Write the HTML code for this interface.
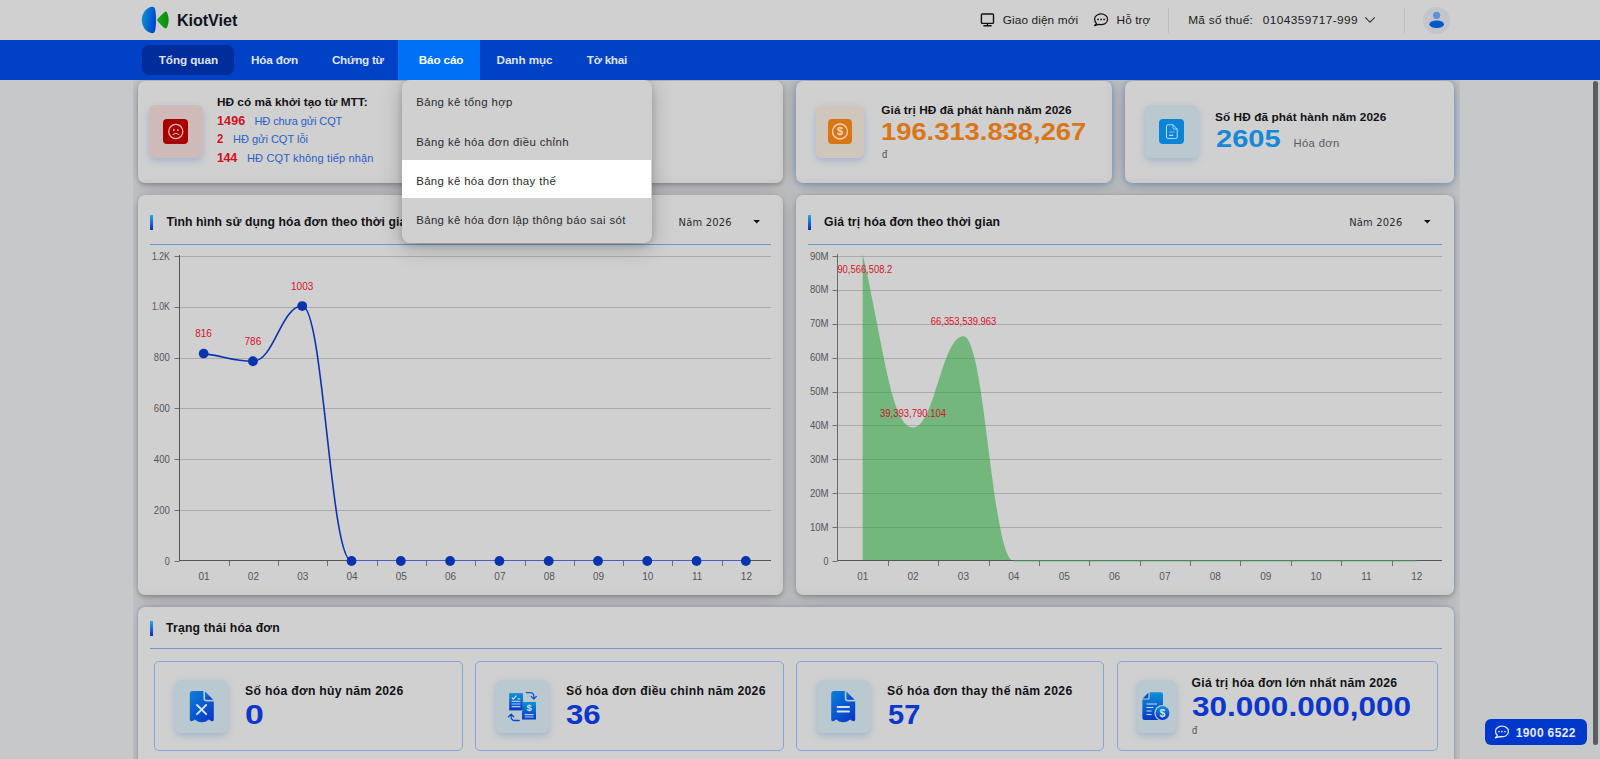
<!DOCTYPE html>
<html lang="vi"><head><meta charset="utf-8"><title>KiotViet - Tổng quan</title>
<style>
*{box-sizing:border-box}
html,body{margin:0;padding:0}
body{width:1600px;height:759px;overflow:hidden;background:#c7c8ca;font-family:"Liberation Sans",sans-serif;position:relative}
.abs{position:absolute}
.t{position:absolute;white-space:pre;line-height:1;transform-origin:0 50%}
.card{position:absolute;background:#d0d0d0;border-radius:7px;}
.c1{box-shadow:0 0 20px 2px rgba(0,5,20,.16),0 2px 4px rgba(0,0,0,.24)}
.c2{box-shadow:0 0 20px 2px rgba(0,5,20,.16),0 1px 6px rgba(50,100,190,.5)}
.c4{box-shadow:0 0 20px 2px rgba(0,5,20,.16),0 2px 4px rgba(0,0,0,.2),2px 0 4px -1px rgba(70,120,200,.18)}
.c3{box-shadow:0 0 20px 2px rgba(0,5,20,.16),0 0 3px rgba(60,110,200,.45)}
.ibox{position:absolute;border-radius:6px;box-shadow:0 3px 7px rgba(80,125,195,.34)}
.isq{position:absolute;border-radius:4px}
.bar{position:absolute;width:3px;background:linear-gradient(#22a8ea,#0a2acc)}
.ul{position:absolute;height:1px;background:#6b9ad6}
.sc{position:absolute;border:1px solid #82a6da;border-radius:5px}
</style></head><body>

<!-- header -->
<div class="abs" style="left:0;top:0;width:1600px;height:40px;background:#d0d0d0;z-index:20"></div>
<div class="abs" style="left:0;top:40px;width:1600px;height:40px;background:#0041c5;z-index:20"></div>
<div class="abs" style="left:142px;top:45px;width:92px;height:30px;border-radius:7px;background:#002c9c;z-index:21"></div>
<div class="abs" style="left:398px;top:39.5px;width:82px;height:40.5px;background:#0070f4;z-index:21"></div>
<div class="abs" style="left:1168px;top:8px;width:1px;height:25px;background:#bcbdc0;z-index:21"></div>
<div class="abs" style="left:1404px;top:8px;width:1px;height:25px;background:#bcbdc0;z-index:21"></div>
<div class="abs" style="left:1423px;top:6.5px;width:27px;height:27px;border-radius:50%;background:#c3c5ca;z-index:21"></div>
<!-- cards -->
<div class="abs" style="left:133px;top:80px;width:1327px;height:679px;overflow:hidden">
<div class="card c1" style="left:5px;top:0.5px;width:645px;height:102px"></div>
<div class="card c2" style="left:663px;top:0.5px;width:316px;height:102px"></div>
<div class="card c2" style="left:992px;top:0.5px;width:329px;height:102px"></div>
<div class="card c1" style="left:5px;top:115px;width:645px;height:400px"></div>
<div class="card c4" style="left:663px;top:115px;width:658px;height:400px"></div>
<div class="card c3" style="left:5px;top:527.3px;width:1316px;height:200px"></div>
</div>
<!-- icon boxes -->
<div class="ibox" style="left:149px;top:105px;width:53.6px;height:53px;background:#cebab9"></div>
<div class="isq" style="left:163.4px;top:119px;width:24.8px;height:25px;background:#a80000"></div>
<div class="ibox" style="left:816px;top:105px;width:48px;height:53px;background:#cfc7bb"></div>
<div class="isq" style="left:827.6px;top:119px;width:24.8px;height:25px;background:#d87616"></div>
<div class="ibox" style="left:1145px;top:105px;width:53px;height:53px;background:#bac9cf"></div>
<div class="isq" style="left:1159.2px;top:119px;width:24.9px;height:25px;background:#0b84d6"></div>
<!-- section bars -->
<div class="bar" style="left:150px;top:215px;height:14.5px"></div>
<div class="ul" style="left:150px;top:244px;width:621px"></div>
<div class="bar" style="left:808px;top:215px;height:14.5px"></div>
<div class="ul" style="left:808px;top:244px;width:634px"></div>
<div class="bar" style="left:150px;top:621px;height:15px"></div>
<div class="ul" style="left:150px;top:648px;width:1292px"></div>
<!-- small cards -->
<div class="sc" style="left:154px;top:661.4px;width:308.6px;height:89.4px"></div>
<div class="sc" style="left:475px;top:661.4px;width:308.6px;height:89.4px"></div>
<div class="sc" style="left:796px;top:661.4px;width:308px;height:89.4px"></div>
<div class="sc" style="left:1117px;top:661.4px;width:321px;height:89.4px"></div>
<div class="ibox" style="left:175px;top:680px;width:53px;height:53px;background:#bac9cf"></div>
<div class="ibox" style="left:495.5px;top:680px;width:53.5px;height:53px;background:#bac9cf"></div>
<div class="ibox" style="left:816.5px;top:680px;width:53.5px;height:53px;background:#bac9cf"></div>
<div class="ibox" style="left:1136.6px;top:680px;width:39px;height:53px;background:#bac9cf"></div>
<!-- dropdown -->
<div class="abs" style="left:402px;top:80px;width:250px;height:163px;background:#d0d0d0;border-radius:8px;box-shadow:0 4px 22px rgba(0,0,0,.24),0 2px 6px rgba(0,0,0,.14);z-index:19"></div>
<div class="abs" style="left:402px;top:160px;width:249px;height:38px;background:#fff;z-index:19"></div>
<!-- phone btn -->
<div class="abs" style="left:1485px;top:719px;width:102px;height:26px;border-radius:6px;background:#0038cc;z-index:39"></div>
<!-- scrollbar -->
<div class="abs" style="left:1593px;top:81px;width:4.5px;height:664px;border-radius:3px;background:#5c5c5e;z-index:39"></div>

<svg class="abs" style="left:0;top:0;z-index:2" width="1600" height="759" viewBox="0 0 1600 759" shape-rendering="auto"><line x1="179.5" x2="771" y1="510.5" y2="510.5" stroke="#aaaaab"/><line x1="179.5" x2="771" y1="459.5" y2="459.5" stroke="#aaaaab"/><line x1="179.5" x2="771" y1="408.5" y2="408.5" stroke="#aaaaab"/><line x1="179.5" x2="771" y1="358.5" y2="358.5" stroke="#aaaaab"/><line x1="179.5" x2="771" y1="307.5" y2="307.5" stroke="#aaaaab"/><line x1="179.5" x2="771" y1="256.5" y2="256.5" stroke="#aaaaab"/><line x1="174.5" x2="179.5" y1="561.5" y2="561.5" stroke="#707072"/><line x1="174.5" x2="179.5" y1="510.5" y2="510.5" stroke="#707072"/><line x1="174.5" x2="179.5" y1="459.5" y2="459.5" stroke="#707072"/><line x1="174.5" x2="179.5" y1="408.5" y2="408.5" stroke="#707072"/><line x1="174.5" x2="179.5" y1="358.5" y2="358.5" stroke="#707072"/><line x1="174.5" x2="179.5" y1="307.5" y2="307.5" stroke="#707072"/><line x1="174.5" x2="179.5" y1="256.5" y2="256.5" stroke="#707072"/><line x1="179.5" x2="179.5" y1="255" y2="561" stroke="#555557"/><line x1="179.5" x2="771" y1="560.5" y2="560.5" stroke="#555557"/><line x1="229.5" x2="229.5" y1="561" y2="566" stroke="#707072"/><line x1="278.5" x2="278.5" y1="561" y2="566" stroke="#707072"/><line x1="327.5" x2="327.5" y1="561" y2="566" stroke="#707072"/><line x1="377.5" x2="377.5" y1="561" y2="566" stroke="#707072"/><line x1="426.5" x2="426.5" y1="561" y2="566" stroke="#707072"/><line x1="475.5" x2="475.5" y1="561" y2="566" stroke="#707072"/><line x1="525.5" x2="525.5" y1="561" y2="566" stroke="#707072"/><line x1="574.5" x2="574.5" y1="561" y2="566" stroke="#707072"/><line x1="623.5" x2="623.5" y1="561" y2="566" stroke="#707072"/><line x1="672.5" x2="672.5" y1="561" y2="566" stroke="#707072"/><line x1="722.5" x2="722.5" y1="561" y2="566" stroke="#707072"/><path d="M203.65,353.60 C224.84,356.12 231.74,361.23 252.94,361.23 C274.13,361.23 281.03,306.07 302.23,306.07 C323.42,306.07 330.33,561.00 351.52,561.00" fill="none" stroke="#0a34ad" stroke-width="1.6"/><line x1="351.52" x2="745.85" y1="560.5" y2="560.5" stroke="#4a5cc6" stroke-width="1.2"/><circle cx="203.65" cy="353.60" r="4.9" fill="#0a34ad"/><circle cx="252.94" cy="361.23" r="4.9" fill="#0a34ad"/><circle cx="302.23" cy="306.07" r="4.9" fill="#0a34ad"/><circle cx="351.52" cy="561.00" r="4.9" fill="#0a34ad"/><circle cx="400.81" cy="561.00" r="4.9" fill="#0a34ad"/><circle cx="450.10" cy="561.00" r="4.9" fill="#0a34ad"/><circle cx="499.40" cy="561.00" r="4.9" fill="#0a34ad"/><circle cx="548.69" cy="561.00" r="4.9" fill="#0a34ad"/><circle cx="597.98" cy="561.00" r="4.9" fill="#0a34ad"/><circle cx="647.27" cy="561.00" r="4.9" fill="#0a34ad"/><circle cx="696.56" cy="561.00" r="4.9" fill="#0a34ad"/><circle cx="745.85" cy="561.00" r="4.9" fill="#0a34ad"/><line x1="837.5" x2="1442" y1="527.5" y2="527.5" stroke="#aaaaab"/><line x1="837.5" x2="1442" y1="493.5" y2="493.5" stroke="#aaaaab"/><line x1="837.5" x2="1442" y1="459.5" y2="459.5" stroke="#aaaaab"/><line x1="837.5" x2="1442" y1="425.5" y2="425.5" stroke="#aaaaab"/><line x1="837.5" x2="1442" y1="392.5" y2="392.5" stroke="#aaaaab"/><line x1="837.5" x2="1442" y1="358.5" y2="358.5" stroke="#aaaaab"/><line x1="837.5" x2="1442" y1="324.5" y2="324.5" stroke="#aaaaab"/><line x1="837.5" x2="1442" y1="290.5" y2="290.5" stroke="#aaaaab"/><line x1="837.5" x2="1442" y1="256.5" y2="256.5" stroke="#aaaaab"/><line x1="832.5" x2="837.5" y1="561.5" y2="561.5" stroke="#707072"/><line x1="832.5" x2="837.5" y1="527.5" y2="527.5" stroke="#707072"/><line x1="832.5" x2="837.5" y1="493.5" y2="493.5" stroke="#707072"/><line x1="832.5" x2="837.5" y1="459.5" y2="459.5" stroke="#707072"/><line x1="832.5" x2="837.5" y1="425.5" y2="425.5" stroke="#707072"/><line x1="832.5" x2="837.5" y1="392.5" y2="392.5" stroke="#707072"/><line x1="832.5" x2="837.5" y1="358.5" y2="358.5" stroke="#707072"/><line x1="832.5" x2="837.5" y1="324.5" y2="324.5" stroke="#707072"/><line x1="832.5" x2="837.5" y1="290.5" y2="290.5" stroke="#707072"/><line x1="832.5" x2="837.5" y1="256.5" y2="256.5" stroke="#707072"/><path d="M862.69,254.08 C884.35,349.46 891.40,427.50 913.06,427.50 C934.72,427.50 941.78,336.14 963.44,336.14 C985.10,336.14 992.15,561.00 1013.81,561.00 C1035.47,561.00 1042.53,561.00 1064.19,561.00 C1085.85,561.00 1092.90,561.00 1114.56,561.00 C1136.22,561.00 1143.28,561.00 1164.94,561.00 C1186.60,561.00 1193.65,561.00 1215.31,561.00 C1236.97,561.00 1244.03,561.00 1265.69,561.00 C1287.35,561.00 1294.40,561.00 1316.06,561.00 C1337.72,561.00 1344.78,561.00 1366.44,561.00 C1388.10,561.00 1395.15,561.00 1416.81,561.00 L1416.81,561 L862.69,561 Z" fill="#30a541" fill-opacity="0.58"/><line x1="837.5" x2="837.5" y1="254" y2="561" stroke="#6a6a6c"/><line x1="837.5" x2="1442" y1="560.5" y2="560.5" stroke="#555557"/><line x1="1013.81" x2="1416.81" y1="560.6" y2="560.6" stroke="#4d8659" stroke-width="1.1"/><line x1="888.5" x2="888.5" y1="561" y2="566" stroke="#707072"/><line x1="938.5" x2="938.5" y1="561" y2="566" stroke="#707072"/><line x1="989.5" x2="989.5" y1="561" y2="566" stroke="#707072"/><line x1="1039.5" x2="1039.5" y1="561" y2="566" stroke="#707072"/><line x1="1089.5" x2="1089.5" y1="561" y2="566" stroke="#707072"/><line x1="1140.5" x2="1140.5" y1="561" y2="566" stroke="#707072"/><line x1="1190.5" x2="1190.5" y1="561" y2="566" stroke="#707072"/><line x1="1240.5" x2="1240.5" y1="561" y2="566" stroke="#707072"/><line x1="1291.5" x2="1291.5" y1="561" y2="566" stroke="#707072"/><line x1="1341.5" x2="1341.5" y1="561" y2="566" stroke="#707072"/><line x1="1392.5" x2="1392.5" y1="561" y2="566" stroke="#707072"/></svg>
<svg class="abs" style="left:0;top:0;z-index:3;font-family:'Liberation Sans',sans-serif" width="1600" height="759"><text x="169.8" y="564.5" text-anchor="end" fill="#555659" font-size="10" textLength="5" lengthAdjust="spacingAndGlyphs">0</text><text x="169.8" y="513.7" text-anchor="end" fill="#555659" font-size="10" textLength="16" lengthAdjust="spacingAndGlyphs">200</text><text x="169.8" y="462.8" text-anchor="end" fill="#555659" font-size="10" textLength="16" lengthAdjust="spacingAndGlyphs">400</text><text x="169.8" y="412.0" text-anchor="end" fill="#555659" font-size="10" textLength="16" lengthAdjust="spacingAndGlyphs">600</text><text x="169.8" y="361.2" text-anchor="end" fill="#555659" font-size="10" textLength="16" lengthAdjust="spacingAndGlyphs">800</text><text x="169.8" y="310.3" text-anchor="end" fill="#555659" font-size="10" textLength="17.9" lengthAdjust="spacingAndGlyphs">1.0K</text><text x="169.8" y="259.5" text-anchor="end" fill="#555659" font-size="10" textLength="17.9" lengthAdjust="spacingAndGlyphs">1.2K</text><text x="204.1" y="579.8" text-anchor="middle" fill="#555659" font-size="10">01</text><text x="862.7" y="579.8" text-anchor="middle" fill="#555659" font-size="10">01</text><text x="253.4" y="579.8" text-anchor="middle" fill="#555659" font-size="10">02</text><text x="913.1" y="579.8" text-anchor="middle" fill="#555659" font-size="10">02</text><text x="302.7" y="579.8" text-anchor="middle" fill="#555659" font-size="10">03</text><text x="963.4" y="579.8" text-anchor="middle" fill="#555659" font-size="10">03</text><text x="352.0" y="579.8" text-anchor="middle" fill="#555659" font-size="10">04</text><text x="1013.8" y="579.8" text-anchor="middle" fill="#555659" font-size="10">04</text><text x="401.3" y="579.8" text-anchor="middle" fill="#555659" font-size="10">05</text><text x="1064.2" y="579.8" text-anchor="middle" fill="#555659" font-size="10">05</text><text x="450.6" y="579.8" text-anchor="middle" fill="#555659" font-size="10">06</text><text x="1114.6" y="579.8" text-anchor="middle" fill="#555659" font-size="10">06</text><text x="499.9" y="579.8" text-anchor="middle" fill="#555659" font-size="10">07</text><text x="1164.9" y="579.8" text-anchor="middle" fill="#555659" font-size="10">07</text><text x="549.2" y="579.8" text-anchor="middle" fill="#555659" font-size="10">08</text><text x="1215.3" y="579.8" text-anchor="middle" fill="#555659" font-size="10">08</text><text x="598.5" y="579.8" text-anchor="middle" fill="#555659" font-size="10">09</text><text x="1265.7" y="579.8" text-anchor="middle" fill="#555659" font-size="10">09</text><text x="647.8" y="579.8" text-anchor="middle" fill="#555659" font-size="10">10</text><text x="1316.1" y="579.8" text-anchor="middle" fill="#555659" font-size="10">10</text><text x="697.1" y="579.8" text-anchor="middle" fill="#555659" font-size="10">11</text><text x="1366.4" y="579.8" text-anchor="middle" fill="#555659" font-size="10">11</text><text x="746.4" y="579.8" text-anchor="middle" fill="#555659" font-size="10">12</text><text x="1416.8" y="579.8" text-anchor="middle" fill="#555659" font-size="10">12</text><text x="828.6" y="564.5" text-anchor="end" fill="#555659" font-size="10" textLength="5" lengthAdjust="spacingAndGlyphs">0</text><text x="828.6" y="530.6" text-anchor="end" fill="#555659" font-size="10" textLength="18.7" lengthAdjust="spacingAndGlyphs">10M</text><text x="828.6" y="496.7" text-anchor="end" fill="#555659" font-size="10" textLength="18.7" lengthAdjust="spacingAndGlyphs">20M</text><text x="828.6" y="462.8" text-anchor="end" fill="#555659" font-size="10" textLength="18.7" lengthAdjust="spacingAndGlyphs">30M</text><text x="828.6" y="428.9" text-anchor="end" fill="#555659" font-size="10" textLength="18.7" lengthAdjust="spacingAndGlyphs">40M</text><text x="828.6" y="395.1" text-anchor="end" fill="#555659" font-size="10" textLength="18.7" lengthAdjust="spacingAndGlyphs">50M</text><text x="828.6" y="361.2" text-anchor="end" fill="#555659" font-size="10" textLength="18.7" lengthAdjust="spacingAndGlyphs">60M</text><text x="828.6" y="327.3" text-anchor="end" fill="#555659" font-size="10" textLength="18.7" lengthAdjust="spacingAndGlyphs">70M</text><text x="828.6" y="293.4" text-anchor="end" fill="#555659" font-size="10" textLength="18.7" lengthAdjust="spacingAndGlyphs">80M</text><text x="828.6" y="259.5" text-anchor="end" fill="#555659" font-size="10" textLength="18.7" lengthAdjust="spacingAndGlyphs">90M</text><text x="203.6" y="337.1" text-anchor="middle" fill="#d8102a" font-size="10">816</text><text x="252.9" y="344.7" text-anchor="middle" fill="#d8102a" font-size="10">786</text><text x="302.2" y="289.6" text-anchor="middle" fill="#d8102a" font-size="10">1003</text><text x="864.8" y="273.0" text-anchor="middle" fill="#d8102a" font-size="10" textLength="54.8" lengthAdjust="spacingAndGlyphs">90,566,508.2</text><text x="963.5" y="324.8" text-anchor="middle" fill="#d8102a" font-size="10" textLength="65.4" lengthAdjust="spacingAndGlyphs">66,353,539.963</text><text x="913.0" y="416.5" text-anchor="middle" fill="#d8102a" font-size="10" textLength="66" lengthAdjust="spacingAndGlyphs">39,393,790.104</text></svg>
<!--ICONS-->
<svg class="abs" style="left:0;top:0;z-index:22" width="1600" height="80" viewBox="0 0 1600 80"><defs><linearGradient id="lgb" x1="0" y1="0.3" x2="1" y2="0.6"><stop offset="0" stop-color="#0c94d2"/><stop offset="1" stop-color="#0040cf"/></linearGradient>
<linearGradient id="lgg" x1="0" y1="0" x2="1" y2="0"><stop offset="0" stop-color="#18a818"/><stop offset="1" stop-color="#088c0c"/></linearGradient></defs>
<path d="M152.3,6.8 C147,7 141.8,13 141.8,20 C141.8,27 147,33 152.3,33.2 C154,33.2 155,32 155.3,30 C156.3,24 156.3,16 155.3,10 C155,8 154,6.8 152.3,6.8 Z" fill="url(#lgb)"/>
<path d="M157.5,19 C160,16 163,13.1 164.8,11.9 C165.8,11.3 166.7,11.7 167.1,12.7 C169.2,17.4 169.2,22.6 167.1,27.3 C166.7,28.3 165.8,28.7 164.8,28.1 C163,26.9 160,24 157.5,21 C157,20.4 157,19.6 157.5,19 Z" fill="url(#lgg)"/><rect x="981.4" y="14" width="12.1" height="9.4" rx="1" fill="none" stroke="#111" stroke-width="1.4"/><path d="M987.45,23.6 V25.4 M983.4,25.7 H991.6" stroke="#111" stroke-width="1.4" fill="none"/><path d="M1096.5,23.4 C1093.8999999999999,21.0 1093.8999999999999,16.799999999999997 1096.8999999999999,15.2 C1099.5,13.799999999999999 1103.3,13.799999999999999 1105.6999999999998,15.399999999999999 C1108.5,17.4 1108.1,21.799999999999997 1105.1,23.599999999999998 C1103.3,24.599999999999998 1100.1,24.599999999999998 1098.6999999999998,24.4 L1094.5,25.599999999999998 Z" fill="none" stroke="#111" stroke-width="1.25" stroke-linejoin="round"/><circle cx="1098.1" cy="19.4" r="0.85" fill="#111"/><circle cx="1101.1" cy="19.4" r="0.85" fill="#111"/><circle cx="1104.1" cy="19.4" r="0.85" fill="#111"/><path d="M1365.2,17.4 L1370,22.2 L1374.8,17.4" fill="none" stroke="#333" stroke-width="1.1"/><circle cx="1436.6" cy="15.3" r="3.6" fill="#5f92d2"/><ellipse cx="1436.7" cy="24.2" rx="7.3" ry="3.8" fill="#0057c8"/></svg><svg class="abs" style="left:0;top:0;z-index:4" width="1600" height="759" viewBox="0 0 1600 759"><defs>
<linearGradient id="gd" x1="0.1" y1="0" x2="0.9" y2="1"><stop offset="0" stop-color="#0a7cd8"/><stop offset="1" stop-color="#0a36c6"/></linearGradient>
<linearGradient id="gv" x1="0" y1="0" x2="0" y2="1"><stop offset="0" stop-color="#0a92d6"/><stop offset="1" stop-color="#0a36c6"/></linearGradient>
</defs><circle cx="175.8" cy="131.5" r="7.1" fill="none" stroke="#e6bcbc" stroke-width="1.25"/><rect x="173" y="129.2" width="1.6" height="1.6" fill="#e6bcbc"/><rect x="177" y="129.2" width="1.6" height="1.6" fill="#e6bcbc"/><path d="M172.5,134.6 Q175.9,132.2 179.3,134.6" fill="none" stroke="#e6bcbc" stroke-width="1"/><circle cx="840" cy="131.5" r="7.5" fill="none" stroke="#f1d6b6" stroke-width="1.3"/><text x="840" y="135.4" text-anchor="middle" font-size="11" font-weight="700" fill="#f1d6b6" font-family="Liberation Sans,sans-serif">$</text><path d="M1168,124.8 H1173 L1177.2,129 V137 Q1177.2,138.5 1175.7,138.5 H1168 Q1166.5,138.5 1166.5,137 V126.3 Q1166.5,124.8 1168,124.8 Z M1173,124.8 V127.8 Q1173,129 1174.2,129 H1177.2" fill="none" stroke="#b6d8f2" stroke-width="1"/><path d="M1169.2,132 H1174.6" stroke="#6cb4ea" stroke-width="1.2"/><path d="M1169.2,135.3 H1173.2" stroke="#d6e8f6" stroke-width="1.1"/><path d="M192.8,691 H203.4 V698.2 Q203.4,701.4 206.60000000000002,701.4 H213.8 V719.6 Q213.8,721.6 211.8,721.2 Q210.20000000000002,720.6 208.8,719.6 Q207.4,720.6 205.8,721.4 Q201.8,723 197.8,721.4 Q196.20000000000002,720.6 194.8,719.6 Q193.4,720.6 191.8,721.2 Q189.8,721.6 189.8,719.6 V694 Q189.8,691 192.8,691 Z" fill="url(#gd)"/><path d="M205.0,691.6 L213.20000000000002,699.8 H206.60000000000002 Q205.0,699.8 205.0,698.2 Z" fill="url(#gd)"/><path d="M197,705 L206.2,714.2 M206.2,705 L197,714.2" stroke="#d2e2ec" stroke-width="1.9" stroke-linecap="round"/><path d="M834.2,691 H844.8000000000001 V698.2 Q844.8000000000001,701.4 848.0,701.4 H855.2 V719.6 Q855.2,721.6 853.2,721.2 Q851.6,720.6 850.2,719.6 Q848.8000000000001,720.6 847.2,721.4 Q843.2,723 839.2,721.4 Q837.6,720.6 836.2,719.6 Q834.8000000000001,720.6 833.2,721.2 Q831.2,721.6 831.2,719.6 V694 Q831.2,691 834.2,691 Z" fill="url(#gd)"/><path d="M846.4000000000001,691.6 L854.6,699.8 H848.0 Q846.4000000000001,699.8 846.4000000000001,698.2 Z" fill="url(#gd)"/><path d="M837.6,706.9 H849 M837.6,711.5 H849" stroke="#d2e2ec" stroke-width="2" stroke-linecap="round"/><rect x="509.2" y="693.1" width="13.7" height="17.3" fill="url(#gv)"/><path d="M522.9,702.1 H536 V719.5 H522 V711 H522.9 Z" fill="url(#gv)"/><path d="M511.8,697.6 L513.4,699.2 L516.4,695.6" fill="none" stroke="#d2e2ec" stroke-width="1.2"/><path d="M517.4,698.9 H520.4 M511.6,701.4 H520.4 M511.6,704 H520.4 M511.6,706.6 H520.4" stroke="#a9cdea" stroke-width="1.1"/><text x="529.2" y="711.4" text-anchor="middle" font-size="9.5" font-weight="700" fill="#d2e2ec" font-family="Liberation Sans,sans-serif">$</text><path d="M524.6,714.6 H533.6 M524.6,717 H533.6" stroke="#a9cdea" stroke-width="1.1"/><path d="M526.2,692.6 H530 Q533.8,692.6 533.8,696.4 V698.6 M531.2,696.4 L533.8,699 L536.4,696.4" fill="none" stroke="#0a5cd0" stroke-width="1.3" stroke-linecap="round" stroke-linejoin="round"/><path d="M519.2,720.5 H514.9 Q511.1,720.5 511.1,716.7 V714.6 M508.5,716.8 L511.1,714.2 L513.7,716.8" fill="none" stroke="#0a4acc" stroke-width="1.3" stroke-linecap="round" stroke-linejoin="round"/><path d="M1149.6,692.3 H1161 Q1163,692.3 1163,694.3 V718.1 Q1163,720.1 1161,720.1 H1144.4 Q1142.4,720.1 1142.4,718.1 V699.6 H1148 Q1149.6,699.6 1149.6,698 Z" fill="url(#gv)"/><path d="M1148.4,692.6 V697.4 Q1148.4,698.4 1147.4,698.4 H1142.7 Z" fill="#0a52cc"/><path d="M1146.6,704 H1157 M1146.6,707.5 H1153.4 M1146.6,711 H1151.6 M1146.6,714.5 H1151.6" stroke="#c6dcec" stroke-width="1.2"/><circle cx="1162.5" cy="713" r="8.1" fill="#bac9cf"/><circle cx="1162.5" cy="713" r="6.9" fill="url(#gv)"/><text x="1162.5" y="716.9" text-anchor="middle" font-size="10.5" font-weight="700" fill="#d6e6f0" font-family="Liberation Sans,sans-serif">$</text><path d="M753.4,220 H760 L756.7,223.5 Z" fill="#111"/><path d="M1424,220 H1430.6 L1427.3,223.5 Z" fill="#111"/></svg><svg class="abs" style="left:0;top:0;z-index:41" width="1600" height="759" viewBox="0 0 1600 759"><path d="M1497.4,735.6 C1494.8,733.2 1494.8,729.0 1497.8,727.4 C1500.4,726.0 1504.2,726.0 1506.6,727.6 C1509.4,729.6 1509.0,734.0 1506.0,735.8000000000001 C1504.2,736.8000000000001 1501,736.8000000000001 1499.6,736.6 L1495.4,737.8000000000001 Z" fill="none" stroke="#dfe5f5" stroke-width="1.3" stroke-linejoin="round"/><circle cx="1499" cy="731.6" r="0.85" fill="#dfe5f5"/><circle cx="1502" cy="731.6" r="0.85" fill="#dfe5f5"/><circle cx="1505" cy="731.6" r="0.85" fill="#dfe5f5"/></svg>
<span class="t" style="left:176.90px;top:11px;line-height:18px;font-size:16.2px;font-weight:700;color:#0e1322;z-index:30;letter-spacing:-0.067px;">KiotViet</span>
<span class="t" style="left:1002.75px;top:13px;line-height:14px;font-size:11.8px;font-weight:400;color:#1a1a1c;z-index:30;letter-spacing:0.117px;">Giao diện mới</span>
<span class="t" style="left:1116.50px;top:13px;line-height:14px;font-size:11.8px;font-weight:400;color:#1a1a1c;z-index:30;letter-spacing:0.107px;">Hỗ trợ</span>
<span class="t" style="left:1188.20px;top:13px;line-height:14px;font-size:11.8px;font-weight:400;color:#1a1a1c;z-index:30;letter-spacing:0.294px;">Mã số thuế:</span>
<span class="t" style="left:1262.80px;top:13px;line-height:14px;font-size:11.8px;font-weight:400;color:#1a1a1c;z-index:30;letter-spacing:0.434px;">0104359717-999</span>
<span class="t" style="left:158.75px;top:53px;line-height:13px;font-size:11.7px;font-weight:700;color:#dfe3ef;z-index:30;letter-spacing:-0.054px;">Tổng quan</span>
<span class="t" style="left:251.00px;top:53px;line-height:13px;font-size:11.7px;font-weight:700;color:#dfe3ef;z-index:30;letter-spacing:-0.146px;">Hóa đơn</span>
<span class="t" style="left:331.90px;top:53px;line-height:13px;font-size:11.7px;font-weight:700;color:#dfe3ef;z-index:30;letter-spacing:-0.251px;">Chứng từ</span>
<span class="t" style="left:418.80px;top:53px;line-height:13px;font-size:11.7px;font-weight:700;color:#ffffff;z-index:30;letter-spacing:-0.138px;">Báo cáo</span>
<span class="t" style="left:496.60px;top:53px;line-height:13px;font-size:11.7px;font-weight:700;color:#dfe3ef;z-index:30;letter-spacing:-0.085px;">Danh mục</span>
<span class="t" style="left:586.80px;top:53px;line-height:13px;font-size:11.7px;font-weight:700;color:#dfe3ef;z-index:30;letter-spacing:-0.289px;">Tờ khai</span>
<span class="t" style="left:416.20px;top:96px;line-height:12px;font-size:11.4px;font-weight:400;color:#2b2b2d;z-index:25;letter-spacing:0.380px;">Bảng kê tổng hợp</span>
<span class="t" style="left:416.20px;top:136px;line-height:12px;font-size:11.4px;font-weight:400;color:#2b2b2d;z-index:25;letter-spacing:0.399px;">Bảng kê hóa đơn điều chỉnh</span>
<span class="t" style="left:416.20px;top:175px;line-height:12px;font-size:11.4px;font-weight:400;color:#2b2b2d;z-index:25;letter-spacing:0.373px;">Bảng kê hóa đơn thay thế</span>
<span class="t" style="left:416.20px;top:214px;line-height:12px;font-size:11.4px;font-weight:400;color:#2b2b2d;z-index:25;letter-spacing:0.378px;">Bảng kê hóa đơn lập thông báo sai sót</span>
<span class="t" style="left:216.90px;top:95px;line-height:14px;font-size:11.8px;font-weight:700;color:#121316;letter-spacing:0.033px;">HĐ có mã khởi tạo từ MTT:</span>
<span class="t" style="left:217.00px;top:114px;line-height:14px;font-size:12.5px;font-weight:700;color:#d20f1e;letter-spacing:0.115px;">1496</span>
<span class="t" style="left:254.50px;top:115px;line-height:12px;font-size:11px;font-weight:400;color:#2a60c6;letter-spacing:-0.106px;">HĐ chưa gửi CQT</span>
<span class="t" style="left:217.00px;top:132px;line-height:14px;font-size:12.5px;font-weight:700;color:#d20f1e;transform:scaleX(0.9000);">2</span>
<span class="t" style="left:233.00px;top:133px;line-height:12px;font-size:11px;font-weight:400;color:#2a60c6;letter-spacing:-0.005px;">HĐ gửi CQT lỗi</span>
<span class="t" style="left:217.00px;top:151px;line-height:14px;font-size:12.5px;font-weight:700;color:#d20f1e;letter-spacing:-0.352px;">144</span>
<span class="t" style="left:247.00px;top:152px;line-height:12px;font-size:11px;font-weight:400;color:#2a60c6;letter-spacing:0.148px;">HĐ CQT không tiếp nhận</span>
<span class="t" style="left:881.30px;top:103px;line-height:14px;font-size:11.8px;font-weight:700;color:#121316;letter-spacing:0.068px;">Giá trị HĐ đã phát hành năm 2026</span>
<span class="t" style="left:880.78px;top:118px;line-height:27px;font-size:24.4px;font-weight:700;color:#d97718;transform:scaleX(1.1209);">196.313.838,267</span>
<span class="t" style="left:881.80px;top:148px;line-height:12px;font-size:11px;font-weight:400;color:#55565a;transform:scaleX(0.8571);">đ</span>
<span class="t" style="left:1215.00px;top:110px;line-height:14px;font-size:11.8px;font-weight:700;color:#121316;letter-spacing:0.082px;">Số HĐ đã phát hành năm 2026</span>
<span class="t" style="left:1215.60px;top:125px;line-height:27px;font-size:24.4px;font-weight:700;color:#1787d8;transform:scaleX(1.1919);">2605</span>
<span class="t" style="left:1293.40px;top:137px;line-height:12px;font-size:11.2px;font-weight:400;color:#5a5b5f;letter-spacing:0.418px;">Hóa đơn</span>
<span class="t" style="left:166.40px;top:215px;line-height:14px;font-size:12.2px;font-weight:700;color:#121316;letter-spacing:0.101px;">Tình hình sử dụng hóa đơn theo thời gian</span>
<span class="t" style="left:824.00px;top:215px;line-height:14px;font-size:12.2px;font-weight:700;color:#121316;letter-spacing:0.150px;">Giá trị hóa đơn theo thời gian</span>
<span class="t" style="left:678.60px;top:216px;line-height:13px;font-size:11px;font-weight:400;color:#2a2a2c;font-family:'DejaVu Sans Condensed','Liberation Sans',sans-serif;letter-spacing:0.224px;">Năm 2026</span>
<span class="t" style="left:1349.20px;top:216px;line-height:13px;font-size:11px;font-weight:400;color:#2a2a2c;font-family:'DejaVu Sans Condensed','Liberation Sans',sans-serif;letter-spacing:0.224px;">Năm 2026</span>
<span class="t" style="left:166.00px;top:621px;line-height:14px;font-size:12.2px;font-weight:700;color:#121316;letter-spacing:0.201px;">Trạng thái hóa đơn</span>
<span class="t" style="left:245.10px;top:684px;line-height:14px;font-size:12.2px;font-weight:700;color:#121316;letter-spacing:0.296px;">Số hóa đơn hủy năm 2026</span>
<span class="t" style="left:244.95px;top:700px;line-height:30px;font-size:27px;font-weight:700;color:#0d36cc;transform:scaleX(1.2538);">0</span>
<span class="t" style="left:566.00px;top:684px;line-height:14px;font-size:12.2px;font-weight:700;color:#121316;letter-spacing:0.298px;">Số hóa đơn điều chỉnh năm 2026</span>
<span class="t" style="left:566.40px;top:700px;line-height:30px;font-size:27px;font-weight:700;color:#0d36cc;transform:scaleX(1.1527);">36</span>
<span class="t" style="left:887.10px;top:684px;line-height:14px;font-size:12.2px;font-weight:700;color:#121316;letter-spacing:0.313px;">Số hóa đơn thay thế năm 2026</span>
<span class="t" style="left:887.90px;top:700px;line-height:30px;font-size:27px;font-weight:700;color:#0d36cc;transform:scaleX(1.0753);">57</span>
<span class="t" style="left:1191.60px;top:676px;line-height:14px;font-size:12.2px;font-weight:700;color:#121316;letter-spacing:0.226px;">Giá trị hóa đơn lớn nhất năm 2026</span>
<span class="t" style="left:1192.30px;top:692px;line-height:30px;font-size:27px;font-weight:700;color:#0d36cc;transform:scaleX(1.1673);">30.000.000,000</span>
<span class="t" style="left:1192.00px;top:724px;line-height:12px;font-size:11px;font-weight:400;color:#55565a;transform:scaleX(0.8571);">đ</span>
<span class="t" style="left:1515.80px;top:726px;line-height:14px;font-size:12px;font-weight:700;color:#e6e9f4;z-index:40;letter-spacing:0.356px;">1900 6522</span>
</body></html>
